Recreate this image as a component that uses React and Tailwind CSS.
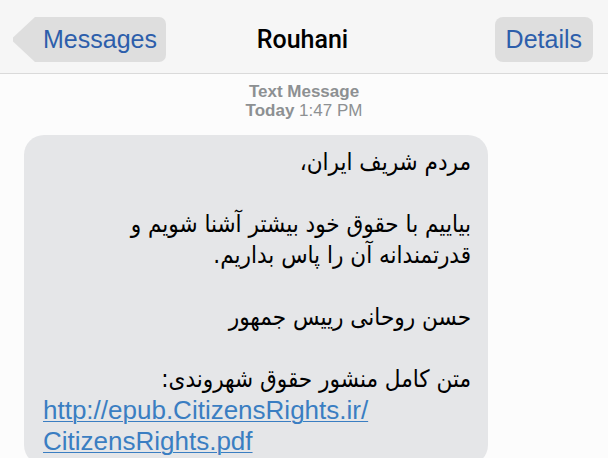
import React from 'react';

const lines = [
  "مردم شریف ایران،",
  "",
  "بیاییم با حقوق خود بیشتر آشنا شویم و",
  "قدرتمندانه آن را پاس بداریم.",
  "",
  "حسن روحانی رییس جمهور",
  "",
  "متن کامل منشور حقوق شهروندی:",
];

const App = () => {
  return (
    <div className="w-[608px] h-[458px] overflow-hidden bg-[#fcfcfc] font-['Liberation_Sans',Arial,sans-serif]">
      {/* Nav bar */}
      <header className="h-[74px] bg-[#f6f6f6] border-b border-[#dadada] grid grid-cols-[1fr_auto_1fr] items-start pt-[17px] pl-3 pr-[15px]">
        <div className="flex">
          <svg width="23" height="45" viewBox="0 0 23 45" className="block">
            <polygon points="23,0 1,20.5 1,24.5 23,45" fill="#dedede" />
          </svg>
          <div className="h-[45px] bg-[#dedede] rounded-r-[7px] pl-2 pr-[9px] flex items-center text-[25px] text-[#2d5eab]">
            Messages
          </div>
        </div>
        <div className="h-[45px] flex items-center text-[25px] text-black font-medium font-['Roboto',sans-serif]">
          Rouhani
        </div>
        <div className="flex justify-end">
          <div className="h-[45px] bg-[#dedede] rounded-[8px] px-[11px] flex items-center text-[25px] text-[#2d5eab]">
            Details
          </div>
        </div>
      </header>

      {/* Timestamp */}
      <div className="pt-2 text-center text-[17px] leading-[19px] text-[#8d9092]">
        <div className="font-bold">Text Message</div>
        <div>
          <span className="font-bold">Today</span> 1:47 PM
        </div>
      </div>

      {/* Bubble */}
      <div className="mt-[15px] ml-6 w-[464px] h-[330px] bg-[#e5e6e8] rounded-[20px] pt-3 pr-[17px] pl-[19px]">
        <div dir="rtl" className="text-[24px] leading-[31px] text-black font-['DejaVu_Sans_Condensed','DejaVu_Sans',sans-serif]">
          {lines.map((line, i) => (
            <div key={i} className="h-[31px] whitespace-nowrap">
              {line}
            </div>
          ))}
        </div>
        <div dir="ltr" className="text-left text-[26px] leading-[31px] text-[#3a7ec2] underline decoration-1 underline-offset-2">
          <div>http://epub.CitizensRights.ir/</div>
          <div>CitizensRights.pdf</div>
        </div>
      </div>
    </div>
  );
};

export default App;
